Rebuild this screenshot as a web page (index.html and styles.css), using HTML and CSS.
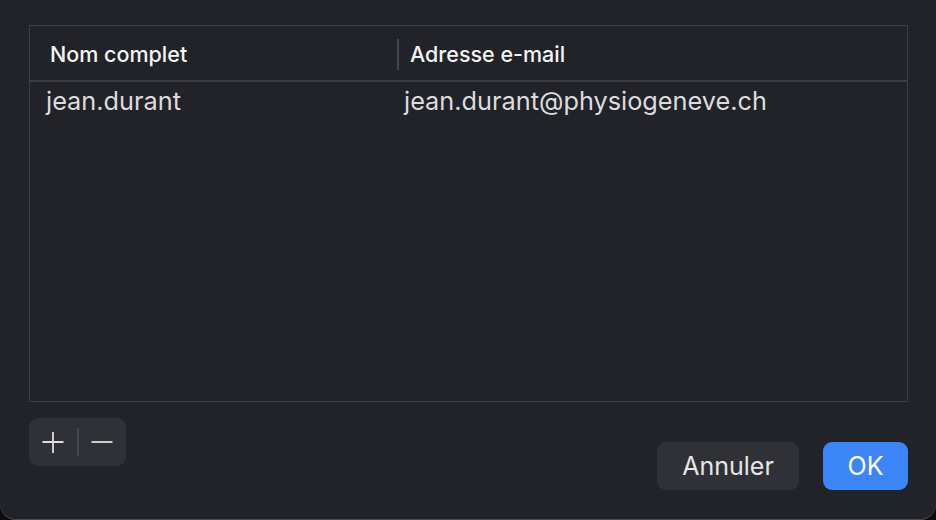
FILE: index.html
```html
<!DOCTYPE html>
<html lang="fr">
<head>
<meta charset="utf-8">
<link rel="stylesheet" href="styles.css">
</head>
<body>
<div class="window">
  <div class="table">
    <div class="thead">
      <div class="th th-name">Nom complet</div>
      <div class="th th-mail"><span class="colsep"></span>Adresse e-mail</div>
    </div>
    <div class="row">
      <div class="td td-name">jean.durant</div>
      <div class="td td-mail">jean.durant@physiogeneve.ch</div>
    </div>
  </div>
  <div class="footer">
    <div class="pm">
      <button class="pm-btn" aria-label="Ajouter">
        <svg width="22" height="22" viewBox="0 0 22 22"><path d="M11 1v21M0.5 11h21" stroke="#dedede" stroke-width="1.8" fill="none"/></svg>
      </button>
      <span class="pm-sep"></span>
      <button class="pm-btn" aria-label="Supprimer">
        <svg width="22" height="22" viewBox="0 0 22 22"><path d="M0.5 11h21" stroke="#dedede" stroke-width="1.8" fill="none"/></svg>
      </button>
    </div>
    <div class="actions">
      <button class="btn btn-cancel">Annuler</button>
      <button class="btn btn-ok">OK</button>
    </div>
  </div>
</div>
</body>
</html>
```
FILE: styles.css
```css
* { box-sizing: border-box; }
html, body {
  margin: 0;
  padding: 0;
  width: 936px;
  height: 520px;
  background: #0c0c0e;
  overflow: hidden;
}
body {
  font-family: Inter, "Liberation Sans", sans-serif;
}
.window {
  width: 936px;
  height: 520px;
  background: #212328;
  border-radius: 0 0 16px 16px;
  box-shadow: inset 0 -1px 0 #4a4b50;
  padding: 25px 28px 0 29px;
  display: flex;
  flex-direction: column;
}
.table {
  height: 377px;
  border: 1px solid #3b3d42;
  display: flex;
  flex-direction: column;
}
.thead {
  display: flex;
  height: 56px;
  border-bottom: 2px solid #3b3d42;
  align-items: center;
  padding-top: 2px;
}
.th {
  color: #f4f4f4;
  font-size: 21.5px;
  font-weight: 500;
  display: flex;
  align-items: center;
}
.th-name { width: 367px; padding-left: 20px; }
.th-mail { flex: 1; }
.colsep {
  width: 2px;
  height: 31px;
  background: #45474c;
  margin-right: 11px;
}
.row {
  display: flex;
  height: 36px;
  align-items: center;
}
.td {
  color: #dcdcde;
  font-size: 25.3px;
}
.td-name { width: 374px; padding-left: 16px; }
.td-mail { flex: 1; }
.footer {
  display: flex;
  justify-content: space-between;
  align-items: flex-start;
  padding-top: 16px;
}
.pm {
  display: flex;
  align-items: center;
  width: 97px;
  height: 48px;
  background: #2f3136;
  border-radius: 9px;
}
.pm-btn {
  background: none;
  border: 0;
  padding: 0;
  flex: 1;
  height: 48px;
  display: flex;
  align-items: center;
  justify-content: center;
}
.pm-sep {
  width: 2px;
  height: 28px;
  background: #44464b;
}
.actions {
  display: flex;
  gap: 24px;
  padding-top: 24px;
}
.btn {
  height: 48px;
  border: 0;
  border-radius: 9px;
  font-family: Inter, "Liberation Sans", sans-serif;
  font-size: 25px;
  padding: 0;
}
.btn-cancel {
  width: 142px;
  background: #2f3136;
  color: #e6e6e6;
}
.btn-ok {
  width: 85px;
  background: #3b85f8;
  color: #ffffff;
}
```
